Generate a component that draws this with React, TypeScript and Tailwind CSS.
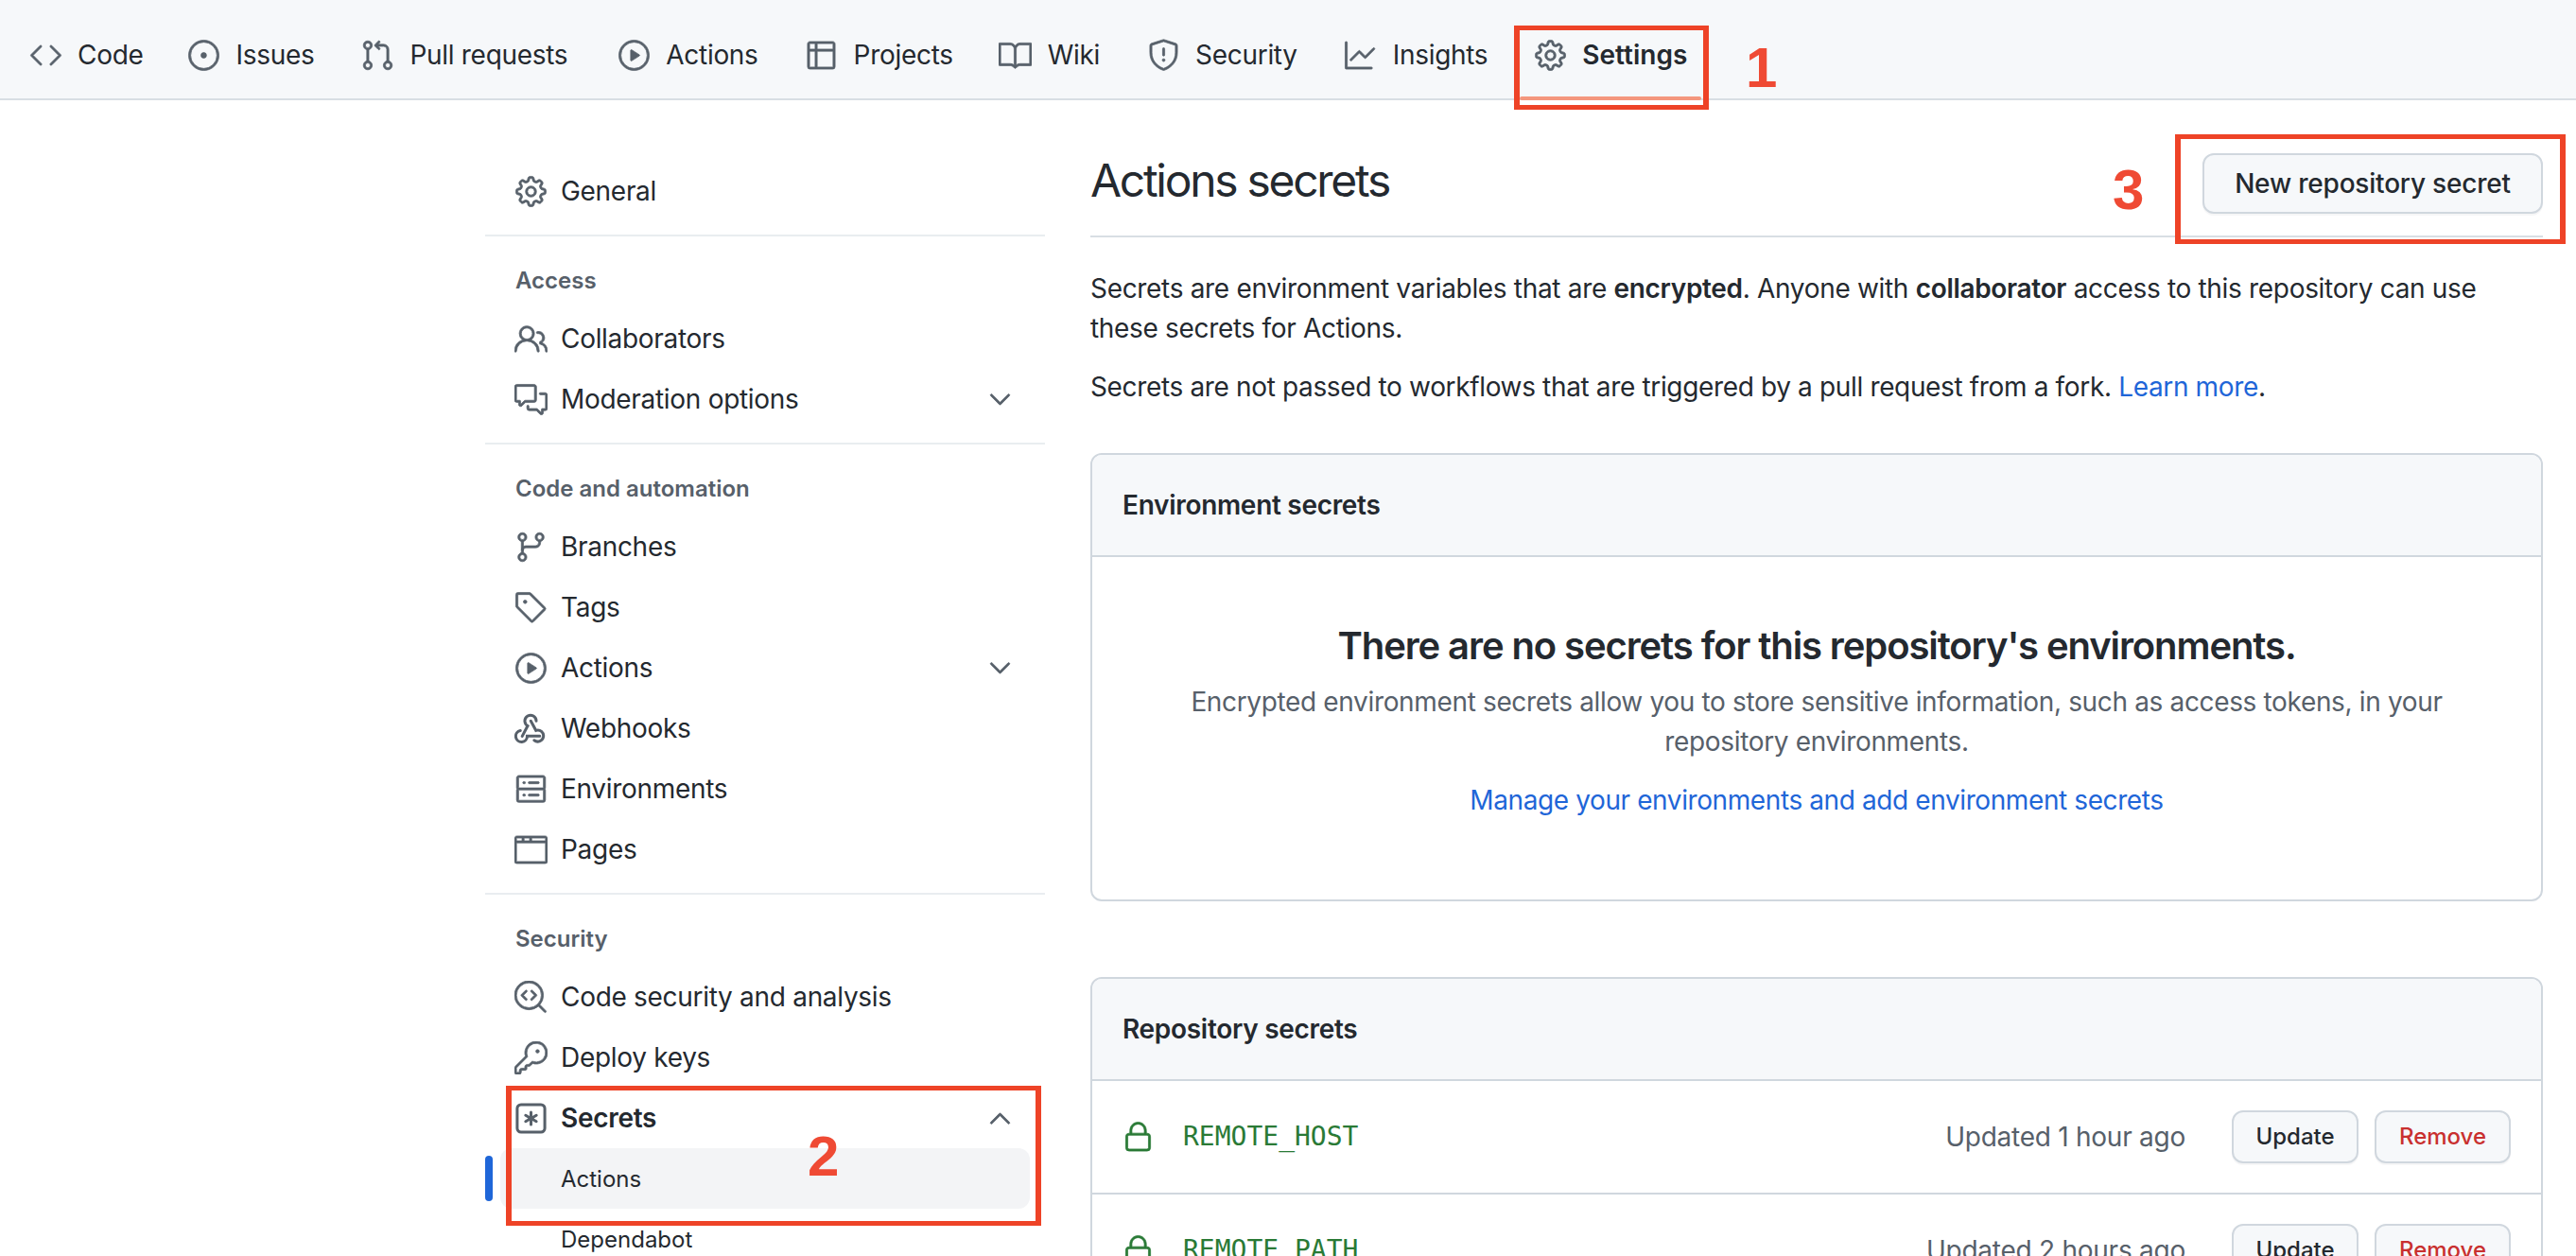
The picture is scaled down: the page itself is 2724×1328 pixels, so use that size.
import React from "react";
import {
  GoBook,
  GoBrowser,
  GoChevronDown,
  GoChevronUp,
  GoCode,
  GoCodescan,
  GoCommentDiscussion,
  GoGear,
  GoGitBranch,
  GoGitPullRequest,
  GoGraph,
  GoIssueOpened,
  GoKey,
  GoLock,
  GoPeople,
  GoPlay,
  GoServer,
  GoShield,
  GoTable,
  GoTag,
} from "react-icons/go";

// estos dos no vienen en react-icons/go
function KeyAsterisk({ size, className }: { size?: number; className?: string }) {
  return (
    <svg width={size} height={size} viewBox="-0.7 -0.7 17.4 17.4" fill="currentColor" className={className}>
      <path d="M0 2.75A2.75 2.75 0 0 1 2.75 0h10.5A2.75 2.75 0 0 1 16 2.75v10.5A2.75 2.75 0 0 1 13.25 16H2.75A2.75 2.75 0 0 1 0 13.25ZM2.75 1.5c-.69 0-1.25.56-1.25 1.25v10.5c0 .69.56 1.25 1.25 1.25h10.5c.69 0 1.25-.56 1.25-1.25V2.75c0-.69-.56-1.25-1.25-1.25Z" />
      <path d="M8 4a.75.75 0 0 1 .75.75V6.7l1.69-.975a.75.75 0 0 1 .75 1.3L9.5 8l1.69.976a.75.75 0 0 1-.75 1.298L8.75 9.3v1.951a.75.75 0 0 1-1.5 0V9.299l-1.69.976a.75.75 0 0 1-.75-1.3L6.5 8l-1.69-.975a.75.75 0 0 1 .75-1.3l1.69.976V4.75A.75.75 0 0 1 8 4Z" />
    </svg>
  );
}

function Webhook({ size, className }: { size?: number; className?: string }) {
  return (
    <svg width={size} height={size} viewBox="-0.7 -0.7 17.4 17.4" fill="none" stroke="currentColor" strokeWidth="1.5" strokeLinecap="round" className={className}>
      <path d="M10.75 3.9a3 3 0 1 0-4.5 2.6L3.4 11.9" />
      <path d="M7.9 3.9l2.7 5a3 3 0 1 1-.9 5.2" />
      <path d="M12.6 11.9H6a3 3 0 1 1-3.6-2.9" />
    </svg>
  );
}

// los iconos de react-icons traen aire alrededor: 35px ocupan lo mismo que 32 y el trazo queda mas grueso
function Ic({ icon: Icon, className = "text-[#57606a]" }: { icon: any; className?: string }) {
  return <Icon size={35} strokeWidth={0.5} className={`-m-[1.5px] shrink-0 ${className}`} />;
}

const tabs = [
  { name: "Code", icon: GoCode, spacing: "-mr-[3px]" },
  { name: "Issues", icon: GoIssueOpened, spacing: "" },
  { name: "Pull requests", icon: GoGitPullRequest, spacing: "mr-[3px]" },
  { name: "Actions", icon: GoPlay, spacing: "" },
  { name: "Projects", icon: GoTable, spacing: "-mr-[1px]" },
  { name: "Wiki", icon: GoBook, spacing: "" },
  { name: "Security", icon: GoShield, spacing: "" },
  { name: "Insights", icon: GoGraph, spacing: "mr-[2px]" },
];

const secrets = [
  { name: "REMOTE_HOST", updated: "Updated 1 hour ago" },
  { name: "REMOTE_PATH", updated: "Updated 2 hours ago" },
];

function SideRow({ icon, label, chevron }: { icon: any; label: string; chevron?: boolean }) {
  return (
    <div className="flex h-16 items-center px-8">
      <Ic icon={icon} />
      <span className="ml-4 flex-1 tracking-[-0.3px]">{label}</span>
      {chevron && <Ic icon={GoChevronDown} />}
    </div>
  );
}

function SideLabel({ children }: { children: React.ReactNode }) {
  return (
    <>
      <div className="mt-[14px] h-[2px] bg-[#e9edf0]" />
      <div className="mb-[11px] mt-[29px] flex h-9 items-center pl-8 text-2xl font-semibold text-[#57606a]">{children}</div>
    </>
  );
}

function Sidebar() {
  return (
    <aside className="w-[592px] shrink-0 pt-16">
      <SideRow icon={GoGear} label="General" />
      <SideLabel>Access</SideLabel>
      <SideRow icon={GoPeople} label="Collaborators" />
      <SideRow icon={GoCommentDiscussion} label="Moderation options" chevron />
      <SideLabel>Code and automation</SideLabel>
      <SideRow icon={GoGitBranch} label="Branches" />
      <SideRow icon={GoTag} label="Tags" />
      <SideRow icon={GoPlay} label="Actions" chevron />
      <SideRow icon={Webhook} label="Webhooks" />
      <SideRow icon={GoServer} label="Environments" />
      <SideRow icon={GoBrowser} label="Pages" />
      <SideLabel>Security</SideLabel>
      <SideRow icon={GoCodescan} label="Code security and analysis" />
      <SideRow icon={GoKey} label="Deploy keys" />
      <div className="flex h-16 items-center px-8">
        <Ic icon={KeyAsterisk} />
        <span className="ml-4 flex-1 font-semibold tracking-[-0.3px]">Secrets</span>
        <Ic icon={GoChevronUp} />
      </div>
      {/* subitem activo con la barrita azul */}
      <div className="relative mx-4 flex h-16 items-center rounded-xl bg-[#f3f4f6] pl-16 pt-[2px] text-2xl">
        <span className="absolute -left-4 top-2 h-12 w-2 rounded-lg bg-[#1f66d8]" />
        Actions
      </div>
      <div className="flex h-16 items-center pl-20 pt-[2px] text-2xl">Dependabot</div>
    </aside>
  );
}

function SecretRow({ name, updated }: { name: string; updated: string }) {
  return (
    <div className="flex h-[120px] items-center border-t-2 border-[#d0d7de] px-8">
      <Ic icon={GoLock} className="text-[#2a7a36]" />
      <span className="ml-8 flex-1 text-[28px] text-[#2a7a36] [font-family:'DejaVu_Sans_Mono',monospace]">{name}</span>
      <span className="mr-[49px] tracking-[-0.25px] text-[#57606a]">{updated}</span>
      <button className="mr-[17px] h-14 w-[134px] rounded-xl border-2 border-[#d0d7de] bg-[#f6f8fa] text-2xl font-medium shadow-[0_2px_0_rgba(31,35,40,0.04)]">
        Update
      </button>
      <button className="h-14 w-[144px] rounded-xl border-2 border-[#d0d7de] bg-[#f6f8fa] text-2xl font-medium text-[#c9302f] shadow-[0_2px_0_rgba(31,35,40,0.04)]">
        Remove
      </button>
    </div>
  );
}

function Content() {
  return (
    <main className="ml-12 w-[1536px] shrink-0">
      <div className="flex items-start justify-between border-b-2 border-[#d8dee4] pb-[23px] pt-12">
        <h2 className="mt-[7px] text-[48px] leading-[60px] tracking-[-2.3px]">Actions secrets</h2>
        <button className="mt-2 h-16 w-[360px] rounded-xl border-2 border-[#d0d7de] bg-[#f6f8fa] font-medium tracking-[-0.2px] shadow-[0_2px_0_rgba(31,35,40,0.04)]">
          New repository secret
        </button>
      </div>
      <p className="mt-[33px] tracking-[-0.32px]">
        Secrets are environment variables that are <b className="font-semibold">encrypted</b>. Anyone with{" "}
        <b className="font-semibold">collaborator</b> access to this repository can use these secrets for Actions.
      </p>
      <p className="mt-5 tracking-[-0.35px]">
        Secrets are not passed to workflows that are triggered by a pull request from a fork.{" "}
        <a className="text-[#1f66d8]">Learn more</a>.
      </p>

      <section className="mt-[49px] overflow-hidden rounded-xl border-2 border-[#d0d7de]">
        <div className="flex h-[106px] items-center bg-[#f6f8fa] px-8 font-semibold tracking-[-0.3px]">Environment secrets</div>
        <div className="border-t-2 border-[#d0d7de] px-16 pb-[84px] pt-16 text-center tracking-[-0.4px]">
          <h3 className="text-[40px] font-semibold leading-[60px] tracking-[-1.1px]">
            There are no secrets for this repository's environments.
          </h3>
          <p className="mt-2 tracking-[-0.35px] text-[#57606a]">
            Encrypted environment secrets allow you to store sensitive information, such as access tokens, in your repository
            environments.
          </p>
          <a className="mt-5 block text-[#1f66d8]">Manage your environments and add environment secrets</a>
        </div>
      </section>

      <section className="mt-20 overflow-hidden rounded-t-xl border-2 border-[#d0d7de]">
        <div className="flex h-[106px] items-center bg-[#f6f8fa] px-8 font-semibold tracking-[-0.3px]">Repository secrets</div>
        {secrets.map((s) => (
          <SecretRow key={s.name} name={s.name} updated={s.updated} />
        ))}
      </section>
    </main>
  );
}

export default function App() {
  return (
    <div className="relative h-[1328px] overflow-hidden bg-white text-[28px] leading-[42px] text-[#24292f] [font-family:Inter,sans-serif]">
      <nav className="flex h-[106px] gap-[51px] border-b-2 border-[#d8dee4] bg-[#f6f8fa] pl-8 pt-[37px]">
        {tabs.map((t) => (
          <div key={t.name} className={`flex h-[42px] items-center gap-[18px] tracking-[-0.3px] ${t.spacing}`}>
            <Ic icon={t.icon} />
            {t.name}
          </div>
        ))}
        <div className="-ml-[3px] flex h-[42px] items-center gap-[18px] font-semibold">
          <Ic icon={GoGear} />
          Settings
        </div>
      </nav>

      <div className="flex pl-[513px]">
        <Sidebar />
        <Content />
      </div>

      {/* subrayado de la pestaña activa y anotaciones rojas encima de la captura */}
      <div className="absolute left-[1607px] top-[102px] h-1 w-[192px] rounded-sm bg-[#f4977d]" />
      <div className="absolute left-[1601px] top-[27px] h-[89px] w-[206px] border-x-[6px] border-y-[5px] border-[#ee4327]" />
      <div className="absolute left-[2300px] top-[142px] h-[116px] w-[413px] border-x-[6px] border-y-[5px] border-[#ee4327]" />
      <div className="absolute left-[535px] top-[1148px] h-[148px] w-[566px] border-x-[6px] border-y-[5px] border-[#ee4327]" />
      <span className="absolute left-[1846px] top-[42px] text-[60px] font-bold leading-[60px] text-[#ef4a34] [font-family:'Liberation_Sans',sans-serif]">1</span>
      <span className="absolute left-[2234px] top-[171px] text-[60px] font-bold leading-[60px] text-[#ef4a34] [font-family:'Liberation_Sans',sans-serif]">3</span>
      <span className="absolute left-[854px] top-[1193px] text-[60px] font-bold leading-[60px] text-[#ef4a34] [font-family:'Liberation_Sans',sans-serif]">2</span>
    </div>
  );
}
